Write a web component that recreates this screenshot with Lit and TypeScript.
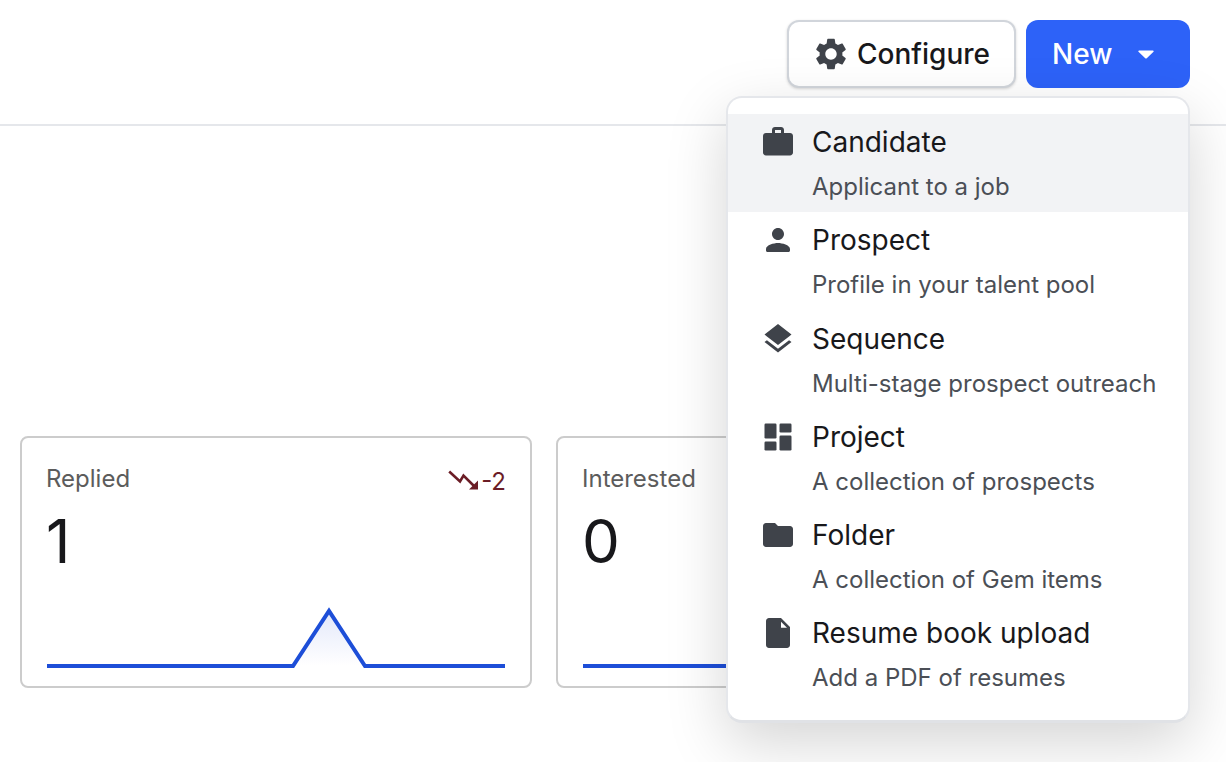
import { LitElement, html, css, svg } from "lit";
import { customElement } from "lit/decorators.js";

const ICONS: Record<string, ReturnType<typeof svg>> = {
  work: svg`<path d="M20 6h-4V4c0-1.11-.89-2-2-2h-4c-1.11 0-2 .89-2 2v2H4c-1.11 0-1.99.89-1.99 2L2 19c0 1.11.89 2 2 2h16c1.11 0 2-.89 2-2V8c0-1.11-.89-2-2-2zm-6 0h-4V4h4v2z"/>`,
  person: svg`<path d="M12 12c2.21 0 4-1.79 4-4s-1.79-4-4-4-4 1.79-4 4 1.79 4 4 4zm0 2c-2.67 0-8 1.34-8 4v1c0 .55.45 1 1 1h14c.55 0 1-.45 1-1v-1c0-2.66-5.33-4-8-4z"/>`,
  layers: svg`<path d="M11.99 18.54l-7.37-5.73L3 14.07l9 7 9-7-1.63-1.27-7.38 5.74zM12 16l7.36-5.73L21 9l-9-7-9 7 1.63 1.27L12 16z"/>`,
  dashboard: svg`<rect x="3" y="3" width="8" height="10" rx=".8"/><rect x="3" y="15" width="8" height="6" rx=".8"/><rect x="13" y="11" width="8" height="10" rx=".8"/><rect x="13" y="3" width="8" height="6" rx=".8"/>`,
  folder: svg`<path d="M10 4H4c-1.1 0-1.99.9-1.99 2L2 18c0 1.1.9 2 2 2h16c1.1 0 2-.9 2-2V8c0-1.1-.9-2-2-2h-8l-2-2z"/>`,
  file: svg`<path d="M6 2c-1.1 0-1.99.9-1.99 2L4 20c0 1.1.89 2 1.99 2H18c1.1 0 2-.9 2-2V8l-6-6H6zm8 2.5L18 8.5h-4V4.5z" fill-rule="evenodd"/>`,
};

const GEAR = "M19.14 12.94c.04-.3.06-.61.06-.94 0-.32-.02-.64-.07-.94l2.03-1.58c.18-.14.23-.41.12-.61l-1.92-3.32c-.12-.22-.37-.29-.59-.22l-2.39.96c-.5-.38-1.03-.7-1.62-.94l-.36-2.54c-.04-.24-.24-.41-.48-.41h-3.84c-.24 0-.43.17-.47.41l-.36 2.54c-.59.24-1.13.57-1.62.94l-2.39-.96c-.22-.08-.47 0-.59.22L2.74 8.87c-.12.21-.08.47.12.61l2.03 1.58c-.05.3-.09.63-.09.94s.02.64.07.94l-2.03 1.58c-.18.14-.23.41-.12.61l1.92 3.32c.12.22.37.29.59.22l2.39-.96c.5.38 1.03.7 1.62.94l.36 2.54c.05.24.24.41.48.41h3.84c.24 0 .44-.17.47-.41l.36-2.54c.59-.24 1.13-.56 1.62-.94l2.39.96c.22.08.47 0 .59-.22l1.92-3.32c.12-.22.07-.47-.12-.61l-2.01-1.58zM12 15.6c-1.98 0-3.6-1.62-3.6-3.6s1.62-3.6 3.6-3.6 3.6 1.62 3.6 3.6-1.62 3.6-3.6 3.6z";

const ITEMS = [
  { icon: "work", title: "Candidate", desc: "Applicant to a job", active: true },
  { icon: "person", title: "Prospect", desc: "Profile in your talent pool" },
  { icon: "layers", title: "Sequence", desc: "Multi-stage prospect outreach" },
  { icon: "dashboard", title: "Project", desc: "A collection of prospects" },
  { icon: "folder", title: "Folder", desc: "A collection of Gem items" },
  { icon: "file", title: "Resume book upload", desc: "Add a PDF of resumes" },
];

@customElement("app-root")
export class AppRoot extends LitElement {
  static styles = css`
    :host {
      display: block;
      position: relative;
      width: 1226px;
      height: 762px;
      overflow: hidden;
      background: #fff;
      font-family: Inter, "Liberation Sans", sans-serif;
      color: #18181b;
    }
    .header {
      box-sizing: border-box;
      height: 126px;
      border-bottom: 2px solid #e5e7eb;
      display: flex;
      justify-content: flex-end;
      align-items: flex-start;
      gap: 10px;
      padding: 20px 36px 0 0;
    }
    .btn {
      box-sizing: border-box;
      height: 68px;
      border-radius: 12px;
      display: flex;
      align-items: center;
      font-size: 28px;
      font-weight: 450;
      line-height: 36px;
    }
    .configure {
      width: 229px;
      padding-left: 23px;
      gap: 7px;
      background: #fff;
      border: 2px solid #d1d5db;
      box-shadow: 0 1px 3px rgba(0, 0, 0, 0.16);
      color: #18181b;
    }
    .configure svg { width: 38px; height: 38px; fill: #3f434a; flex: none; }
    .new {
      width: 164px;
      padding-left: 26px;
      background: #2d62f8;
      color: #fff;
      gap: 16px;
    }
    .new svg { width: 36px; height: 36px; fill: #fff; flex: none; }
    .cards {
      display: flex;
      gap: 24px;
      padding: 310px 0 0 20px;
    }
    .card {
      box-sizing: border-box;
      flex: none;
      width: 512px;
      height: 252px;
      border: 2px solid #cccccc;
      border-radius: 8px;
      padding: 24px 25px 0;
      background: #fff;
    }
    .card-head {
      display: flex;
      justify-content: space-between;
      align-items: flex-start;
      height: 34px;
    }
    .label { font-size: 24px; line-height: 34px; color: #5c5c5c; margin-left: -1px; }
    .trend {
      display: flex;
      align-items: center;
      gap: 2px;
      font-size: 24px;
      line-height: 34px;
      margin: 3px -1px 0 0;
      color: #6b1d26;
    }
    .trend svg { width: 31px; height: 20px; flex: none; margin-top: -5px; }
    .value {
      font-size: 60px;
      line-height: 72px;
      margin: 9px 0 0 -1px;
      color: #18181b;
      letter-spacing: -0.5px;
    }
    .spark { display: block; width: 458px; height: 60px; margin-top: 34px; overflow: visible; }
    .menu {
      position: absolute;
      box-sizing: border-box;
      left: 726px;
      top: 96px;
      width: 464px;
      height: 627px;
      padding: 16px 0;
      background: #fff;
      border: 2px solid #e5e7eb;
      border-bottom: 3px solid #e0e2e6;
      border-radius: 16px;
      box-shadow: 0 20px 60px rgba(0, 0, 0, 0.17);
    }
    .item {
      box-sizing: border-box;
      height: 98.25px;
      padding: 8px 0 0 32px;
      display: grid;
      grid-template-columns: 36px 1fr;
      column-gap: 16px;
      align-items: center;
      align-content: start;
    }
    .item.active { background: #f2f3f5; }
    .item svg { width: 36px; height: 36px; fill: #3f434a; }
    .title { font-size: 28px; line-height: 40px; color: #18181b; }
    .desc {
      grid-column: 2;
      font-size: 24px;
      line-height: 34px;
      margin-top: 8px;
      color: #4b4f56;
    }
  `;

  private card(label: string, value: string, peak: boolean, trend?: string) {
    return html`
      <div class="card">
        <div class="card-head">
          <span class="label">${label}</span>
          ${trend
            ? html`<span class="trend">
                <svg viewBox="0 0 31 20">
                  <path d="M1.2 1.5L12 11.5L15.5 5.5L27 17" fill="none" stroke="#6b1d26" stroke-width="2.6" />
                  <path d="M30 19.5V10.5L21 19.5Z" fill="#6b1d26" />
                </svg>
                ${trend}
              </span>`
            : ""}
        </div>
        <div class="value">${value}</div>
        <svg class="spark" viewBox="0 0 458 60">
          <defs>
            <linearGradient id="g" x1="0" y1="0" x2="0" y2="1">
              <stop offset="0" stop-color="#e3e8fa" />
              <stop offset="1" stop-color="#ffffff" />
            </linearGradient>
          </defs>
          ${peak
            ? svg`<path d="M246 55L282 0L318 55Z" fill="url(#g)" />
                  <polyline points="0,55 246,55 282,0 318,55 458,55" fill="none" stroke="#1d4ed8" stroke-width="4" />`
            : svg`<line x1="0" y1="55" x2="458" y2="55" stroke="#1d4ed8" stroke-width="4" />`}
        </svg>
      </div>
    `;
  }

  render() {
    return html`
      <div class="header">
        <div class="btn configure">
          <svg viewBox="0 0 24 24"><path d=${GEAR} /></svg>
          <span>Configure</span>
        </div>
        <div class="btn new">
          <span>New</span>
          <svg viewBox="0 0 24 24"><path d="M7.4 9.6h9.2c.5 0 .7.6.4.9l-4.5 4.3c-.3.3-.7.3-1 0L7 10.5c-.3-.3-.1-.9.4-.9z" /></svg>
        </div>
      </div>
      <div class="cards">
        ${this.card("Replied", "1", true, "-2")}
        ${this.card("Interested", "0", false)}
      </div>
      <div class="menu">
        ${ITEMS.map(
          (i) => html`
            <div class="item ${i.active ? "active" : ""}">
              <svg viewBox="0 0 24 24">${ICONS[i.icon]}</svg>
              <div class="title">${i.title}</div>
              <div class="desc">${i.desc}</div>
            </div>
          `
        )}
      </div>
    `;
  }
}
